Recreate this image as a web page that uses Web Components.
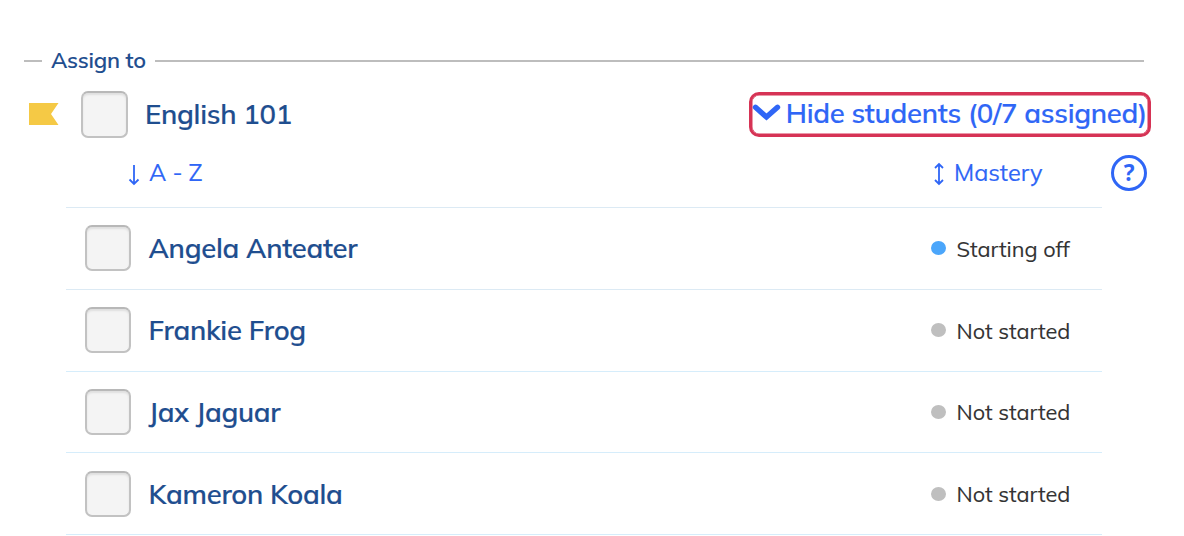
<!DOCTYPE html>
<html lang="en">
<head>
<meta charset="utf-8">
<title>Assign to</title>
<style>
body {
  margin: 0;
  width: 1184px;
  height: 536px;
  overflow: hidden;
  background: #fff;
  font-family: Muli, Mulish, Lato, "Open Sans", sans-serif;
  color: #1f4e8f;
}
</style>
</head>
<body>
<assign-panel legend="Assign to">
  <class-row name="English 101">Hide students (0/7 assigned)</class-row>
  <sort-bar></sort-bar>
  <student-row name="Angela Anteater" dot="#4ba6fb">Starting off</student-row>
  <student-row name="Frankie Frog">Not started</student-row>
  <student-row name="Jax Jaguar" class="short">Not started</student-row>
  <student-row name="Kameron Koala">Not started</student-row>
</assign-panel>

<script>
class CheckBox extends HTMLElement {
  constructor() {
    super();
    this.attachShadow({mode: 'open'}).innerHTML = `
      <style>
        :host {
          display: block;
          flex: none;
          box-sizing: border-box;
          width: 46px;
          height: 46px;
          border: 2px solid #c2c2c2;
          border-top-color: #b8b8b8;
          border-radius: 7px;
          background: #f4f4f4;
          box-shadow: inset 0 2px 2px #dfdfdf;
        }
      </style>`;
  }
}

class AssignPanel extends HTMLElement {
  constructor() {
    super();
    this.attachShadow({mode: 'open'}).innerHTML = `
      <style>
        :host { display: block; padding: 45px 0 0 24px; }
        .legend {
          display: flex;
          align-items: center;
          width: 1120px;
          height: 32px;
          font-size: 22px;
          font-weight: 600;
          line-height: 30px;
        }
        .legend::before, .legend::after {
          content: "";
          height: 2px;
          background: #bdbdbd;
        }
        .legend::before { width: 18px; margin-right: 9px; }
        .legend::after { flex: 1; }
        span {
          width: 104px;
          padding-bottom: 2px;
          white-space: nowrap;
          letter-spacing: -0.2px;
          -webkit-text-stroke: 0.1px;
        }
      </style>
      <div class="legend"><span></span></div>
      <slot></slot>`;
    this.shadowRoot.querySelector('span').textContent = this.getAttribute('legend');
  }
}

class ClassRow extends HTMLElement {
  constructor() {
    super();
    this.attachShadow({mode: 'open'}).innerHTML = `
      <style>
        :host {
          display: flex;
          align-items: center;
          width: 1127px;
          height: 46px;
          padding-top: 14px;
          font-size: 27.500px;
          font-weight: 600;
          letter-spacing: -0.27px;
          -webkit-text-stroke: 0.15px;
          white-space: nowrap;
        }
        .flag { margin-left: 4.500px; }
        check-box { margin: 0 17px 0 22.500px; width: 47px; height: 47px; }
        .name { padding-bottom: 1px; }
        .toggle {
          box-sizing: border-box;
          display: flex;
          align-items: center;
          width: 402px;
          height: 45px;
          margin-left: auto;
          border: 3px solid #d63355;
          border-radius: 10px;
          box-shadow: inset 0 0 0 0.500px #d63355;
          color: #2f66f6;
          line-height: 36px;
        }
        .toggle svg { margin: 0 4.800px 2px 0; flex: none; }
        .label { padding-bottom: 3px; }
      </style>
      <svg class="flag" width="30" height="22" viewBox="0 0 30 22"><path fill="#f5c945" d="M0 0h29.500L22 11l7.500 11H0z"/></svg>
      <check-box></check-box>
      <span class="name"></span>
      <div class="toggle">
        <svg width="29" height="20" viewBox="0 0 29 20"><path d="M3.500 4.300 14.500 14 25.500 4.300" fill="none" stroke="#2f66f6" stroke-width="5.400" stroke-linecap="round"/></svg>
        <span class="label"><slot></slot></span>
      </div>`;
    this.shadowRoot.querySelector('.name').textContent = this.getAttribute('name');
  }
}

class SortBar extends HTMLElement {
  constructor() {
    super();
    this.attachShadow({mode: 'open'}).innerHTML = `
      <style>
        :host {
          display: grid;
          grid-template-columns: 805px 178px 36px;
          align-items: center;
          height: 70px;
          padding-left: 104px;
          color: #2f66f6;
          font-size: 23.500px;
          line-height: 30px;
        }
        .sort {
          display: flex;
          align-items: center;
          gap: 9px;
          -webkit-text-stroke: 0.15px;
        }
        svg { flex: none; margin-top: 4px; }
        path { fill: none; stroke: #2f66f6; stroke-width: 1.800; }
        .help {
          box-sizing: border-box;
          width: 36px;
          height: 36px;
          margin-top: 2px;
          border: 3px solid #2f66f6;
          border-radius: 50%;
          text-align: center;
          font: 700 22.500px/29px "Noto Sans", "Open Sans", sans-serif;
        }
      </style>
      <div class="sort">
        <svg width="12" height="24" viewBox="0 0 12 24"><path d="M6 3v19M1.500 17.500 6 22l4.500-4.500"/></svg>
        <span>A - Z</span>
      </div>
      <div class="sort">
        <svg width="12" height="24" viewBox="0 0 12 24"><path d="M6 2v20M2 6l4-4 4 4M2 18l4 4 4-4"/></svg>
        <span>Mastery</span>
      </div>
      <div class="help">?</div>`;
  }
}

class StudentRow extends HTMLElement {
  constructor() {
    super();
    this.attachShadow({mode: 'open'}).innerHTML = `
      <style>
        :host {
          box-sizing: border-box;
          display: grid;
          grid-template-columns: 46px 800px 1fr;
          grid-template-rows: 46px;
          align-items: center;
          width: 1036px;
          height: 82px;
          margin-left: 42px;
          padding: 17px 0 0 19px;
          border-top: 1px solid #dceaf4;
        }
        :host(.short) { height: 81px; border-color: #d6edfb; }
        :host(:last-child) {
          height: 83px;
          padding-top: 18px;
          border-color: #d6edfb;
          border-bottom: 1px solid #d6edfb;
        }
        .name {
          padding: 0 0 1px 17.500px;
          font-size: 27.500px;
          font-weight: 600;
          line-height: 35px;
          letter-spacing: -0.28px;
          -webkit-text-stroke: 0.15px;
        }
        .status {
          display: flex;
          align-items: center;
          gap: 10.500px;
          color: #333;
          font-size: 21.700px;
          line-height: 28px;
          white-space: nowrap;
        }
        .label { padding-top: 2px; -webkit-text-stroke: 0.1px; }
        :host(.short) .label, :host(:last-child) .label { padding-top: 0; }
        i { width: 15px; height: 14px; border-radius: 50%; }
      </style>
      <check-box></check-box>
      <div class="name"></div>
      <div class="status"><i></i><span class="label"><slot></slot></span></div>`;
    this.shadowRoot.querySelector('.name').textContent = this.getAttribute('name');
    this.shadowRoot.querySelector('i').style.background = this.getAttribute('dot') || '#bfbfbf';
  }
}

customElements.define('check-box', CheckBox);
customElements.define('assign-panel', AssignPanel);
customElements.define('class-row', ClassRow);
customElements.define('sort-bar', SortBar);
customElements.define('student-row', StudentRow);
</script>
</body>
</html>
